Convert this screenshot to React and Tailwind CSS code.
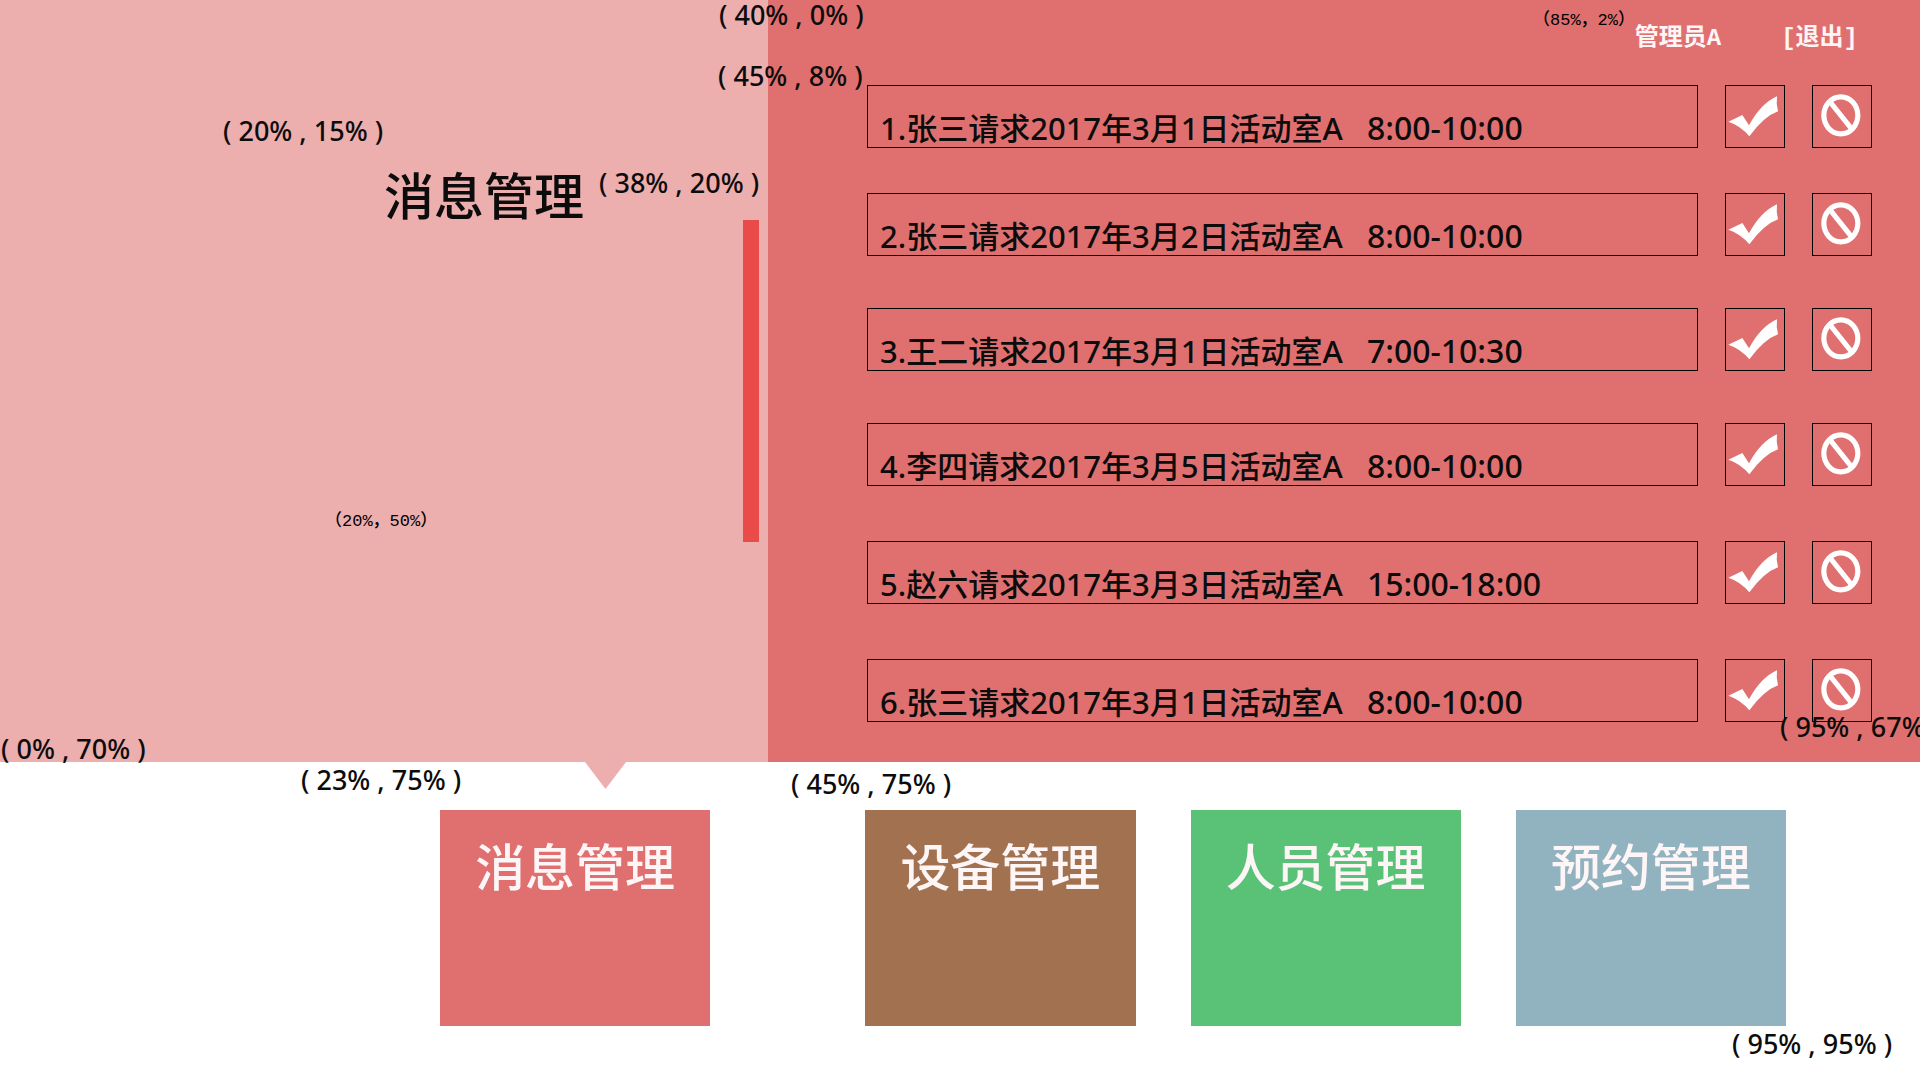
const requests = [
  { text: '1.张三请求2017年3月1日活动室A', time: '8:00-10:00', gap: '' },
  { text: '2.张三请求2017年3月2日活动室A', time: '8:00-10:00', gap: 'mt-[45px]' },
  { text: '3.王二请求2017年3月1日活动室A', time: '7:00-10:30', gap: 'mt-[52px]' },
  { text: '4.李四请求2017年3月5日活动室A', time: '8:00-10:00', gap: 'mt-[52px]' },
  { text: '5.赵六请求2017年3月3日活动室A', time: '15:00-18:00', gap: 'mt-[55px]' },
  { text: '6.张三请求2017年3月1日活动室A', time: '8:00-10:00', gap: 'mt-[55px]' },
];

const modules = [
  { name: '消息管理', look: 'bg-[#e0706f]' },
  { name: '设备管理', look: 'bg-[#a2714f] ml-[155px]' },
  { name: '人员管理', look: 'bg-[#59c277] ml-[55px]' },
  { name: '预约管理', look: 'bg-[#91b2bf] ml-[55px]' },
];

// Layout annotations pinned over the page.
const notes = [
  { text: '( 40% , 0% )', spot: 'left-[719px] top-[2px]' },
  { text: '( 45% , 8% )', spot: 'left-[718px] top-[63px]' },
  { text: '( 20% , 15% )', spot: 'left-[223px] top-[118px]' },
  { text: '( 38% , 20% )', spot: 'left-[599px] top-[170px]' },
  { text: '( 0% , 70% )', spot: 'left-px top-[736px]' },
  { text: '( 23% , 75% )', spot: 'left-[301px] top-[767px]' },
  { text: '( 45% , 75% )', spot: 'left-[791px] top-[771px]' },
  { text: '( 95% , 67% )', spot: 'left-[1780px] top-[714px]' },
  { text: '( 95% , 95% )', spot: 'left-[1732px] top-[1031px]' },
];

const smallNotes = [
  { text: '（85%，2%）', spot: 'left-[1533px] top-[13px]' },
  { text: '（20%，50%）', spot: 'left-[325px] top-[514px]' },
];

function CheckIcon() {
  return (
    <svg viewBox="0 0 150 123" className="h-[41px] w-[50px] fill-white" aria-hidden="true">
      <path d="M1 77 L43 57 L63 88 Q98 23 147 1 Q144 25 150 46 Q108 61 64 121 Q38 89 1 77 Z" />
    </svg>
  );
}

function BanIcon() {
  return (
    <svg viewBox="0 0 120 129" className="h-[43px] w-[40px] fill-none stroke-white" aria-hidden="true">
      <ellipse cx="59.5" cy="64" rx="51" ry="55.5" strokeWidth="15.5" />
      <path d="M26 22 L93 106" strokeWidth="15" />
    </svg>
  );
}

function RequestRow({ text, time, gap }) {
  return (
    <li className={`flex ${gap}`}>
      <div className="flex h-[63px] min-w-0 flex-1 items-end gap-6 whitespace-nowrap border border-black pl-3 pb-0.5 text-[31px] leading-[34px] text-[#0c0c0c]">
        <span>{text}</span>
        <time className="text-[32px]">{time}</time>
      </div>
      <button type="button" aria-label="同意" className="ml-[27px] flex h-[63px] w-[60px] items-start border border-black pl-[2px] pt-[10px]">
        <CheckIcon />
      </button>
      <button type="button" aria-label="拒绝" className="ml-[27px] flex h-[63px] w-[60px] items-start border border-black pl-2 pt-2">
        <BanIcon />
      </button>
    </li>
  );
}

export default function App() {
  return (
    <main className="relative min-h-screen overflow-hidden bg-white font-['Noto_Sans','Noto_Sans_CJK_SC',sans-serif] font-medium">
      <div className="flex">
        <section className="flex w-2/5 items-start bg-[#edaeae]">
          <h1 className="ml-[50%] mt-[171px] flex-1 whitespace-nowrap text-[50px] leading-[50px] text-[#0c0c0c]">消息管理</h1>
          <div className="mr-[9px] mt-[220px] h-[322px] w-4 shrink-0 bg-[#e94b49]" />
        </section>

        <section className="flex-1 bg-[#e0706f] pb-10 pl-[99px] pr-12">
          <header className="flex h-[85px] justify-end gap-[60px] pr-[14px] pt-[25px] font-['Liberation_Mono','Noto_Sans_CJK_SC',monospace] text-2xl leading-7 font-bold text-[#fdf5f6]">
            <span>管理员A</span>
            <button type="button" className="self-start">[退出]</button>
          </header>
          <ul>
            {requests.map((r) => (
              <RequestRow key={r.text} {...r} />
            ))}
          </ul>
        </section>
      </div>

      <nav className="relative flex pb-[52px] pl-[440px] pr-[134px] pt-12">
        <svg viewBox="0 0 41 27" className="absolute left-[585px] top-0 h-[27px] w-[41px] fill-[#edaeae]" aria-hidden="true">
          <path d="M0 0 H41 L20.5 27 Z" />
        </svg>
        {modules.map((m) => (
          <button
            key={m.name}
            type="button"
            className={`flex h-[216px] flex-1 items-start justify-center whitespace-nowrap pt-8 text-[50px] leading-[50px] text-[#fdf5f6] ${m.look}`}
          >
            {m.name}
          </button>
        ))}
      </nav>

      {notes.map((n) => (
        <span key={n.text} className={`absolute whitespace-nowrap text-[27px] leading-[26px] text-[#0c0c0c] ${n.spot}`}>
          {n.text}
        </span>
      ))}
      {smallNotes.map((n) => (
        <span
          key={n.text}
          className={`absolute whitespace-nowrap font-['Liberation_Mono','Noto_Sans_CJK_SC',monospace] text-[17px] leading-4 text-black ${n.spot}`}
        >
          {n.text}
        </span>
      ))}
    </main>
  );
}
